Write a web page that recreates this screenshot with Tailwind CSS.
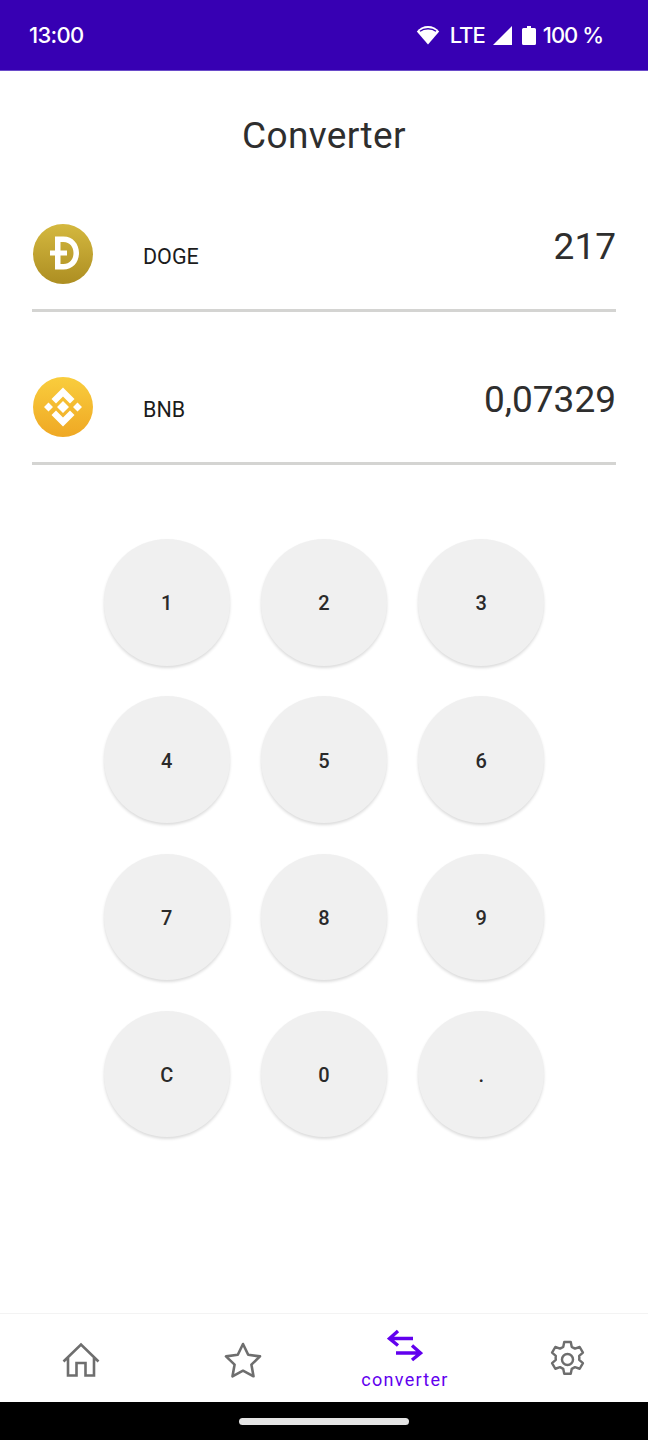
<!DOCTYPE html>
<html>
<head>
<meta charset="utf-8">
<script src="https://cdn.jsdelivr.net/npm/@tailwindcss/browser@4"></script>
</head>
<body class="bg-white font-['Roboto',sans-serif]">
<div class="w-[648px] h-[1440px] flex flex-col overflow-hidden bg-white">
  <!-- status bar -->
  <div class="h-[71px] shrink-0 bg-[#3700b3] flex items-center justify-between pl-[29px] pr-[45px] text-white text-[22px] font-medium font-['Inter','Roboto',sans-serif] border-b border-[#6a4bc9]">
    <span class="tracking-[-0.7px]">13:00</span>
    <div class="flex items-center">
      <svg width="24" height="20" viewBox="0 0 24 20" class="mr-[10px]"><path d="M12 19.500 0.800 6.500C3.500 3 7.500 1 12 1s8.500 2 11.200 5.500z" fill="#fff"/><path d="M4 6.300C6 4.600 8.900 3.700 12 3.700s6 .9 8 2.600" stroke="#3700b3" stroke-width="1.400" fill="none"/></svg>
      <span class="tracking-[-1px] mr-[8px]">LTE</span>
      <svg width="19" height="19" viewBox="0 0 19 19" class="mr-[10px]"><path d="M19 0v19H0z" fill="#fff"/></svg>
      <svg width="14" height="19" viewBox="0 0 14 19" class="mr-[7px]"><path d="M5 0h4v2h3.500q1.500 0 1.500 1.500v14q0 1.500-1.500 1.500h-11Q0 19 0 17.500v-14Q0 2 1.500 2H5z" fill="#fff"/></svg>
      <span class="tracking-[-1px]">100 %</span>
    </div>
  </div>

  <!-- title -->
  <h1 class="h-[129px] shrink-0 flex items-center justify-center text-[37px] tracking-[0.35px] text-[#2e2e2e] pt-[1px]">Converter</h1>

  <!-- converter rows -->
  <div class="flex flex-col gap-[41px] mx-[32px] mb-[74px]">
    <div class="h-[112px] pt-[24px] border-b-[3px] border-[#d4d4d2] flex items-start">
      <svg width="60" height="60" viewBox="0 0 60 60" class="ml-[1px] shrink-0">
        <defs><linearGradient id="d" x1="0" y1="0" x2="0" y2="1"><stop offset="0" stop-color="#d4b83f"/><stop offset="1" stop-color="#ad8e22"/></linearGradient></defs>
        <circle cx="30" cy="30" r="30" fill="url(#d)"/>
        <path d="M22 12.500h8.500C40 12.500 46 20 46 29s-6 16.500-15.500 16.500H22V31.500h-5v-5h5zM27.500 18v8.500H34v5h-6.500V40h3c6.500 0 10-5 10-11s-3.500-11-10-11z" fill="#fff"/>
      </svg>
      <span class="ml-[50px] mt-[20px] text-[21.500px] leading-[26px] text-[#1c1c1c]">DOGE</span>
      <span class="ml-auto mt-0 text-[37px] leading-[46px] text-[#2e2e2e]">217</span>
    </div>
    <div class="h-[112px] pt-[24px] border-b-[3px] border-[#d4d4d2] flex items-start">
      <svg width="60" height="60" viewBox="0 0 60 60" class="ml-[1px] shrink-0">
        <defs><linearGradient id="b" x1="0" y1="0" x2="0" y2="1"><stop offset="0" stop-color="#f9cd3d"/><stop offset="1" stop-color="#efa824"/></linearGradient></defs>
        <circle cx="30" cy="30" r="30" fill="url(#b)"/>
        <path d="M30 10.500 41.500 22 37 26.500l-7-7-7 7L18.500 22zM30 49.500 18.500 38l4.500-4.500 7 7 7-7L41.500 38zM11 30l4.500-4.500L20 30l-4.500 4.500zM40 30l4.500-4.500L49 30l-4.500 4.500zM30 24l6 6-6 6-6-6z" fill="#fff"/>
      </svg>
      <span class="ml-[50px] mt-[20px] text-[21.500px] leading-[26px] text-[#1c1c1c]">BNB</span>
      <span class="ml-auto mt-0 text-[37px] leading-[46px] text-[#2e2e2e]">0,07329</span>
    </div>
  </div>

  <!-- keypad -->
  <div class="grid grid-cols-[126px_126px_126px] auto-rows-[126.500px] gap-x-[31.300px] gap-y-[30.800px] justify-center text-[20px] font-medium text-[#2a2a2a]">
    <button class="pt-[2px] rounded-full bg-[#f0f0f0] shadow-[0_2px_3px_rgba(0,0,0,0.14)]">1</button>
    <button class="pt-[2px] rounded-full bg-[#f0f0f0] shadow-[0_2px_3px_rgba(0,0,0,0.14)]">2</button>
    <button class="pt-[2px] rounded-full bg-[#f0f0f0] shadow-[0_2px_3px_rgba(0,0,0,0.14)]">3</button>
    <button class="pt-[2px] rounded-full bg-[#f0f0f0] shadow-[0_2px_3px_rgba(0,0,0,0.14)]">4</button>
    <button class="pt-[2px] rounded-full bg-[#f0f0f0] shadow-[0_2px_3px_rgba(0,0,0,0.14)]">5</button>
    <button class="pt-[2px] rounded-full bg-[#f0f0f0] shadow-[0_2px_3px_rgba(0,0,0,0.14)]">6</button>
    <button class="pt-[2px] rounded-full bg-[#f0f0f0] shadow-[0_2px_3px_rgba(0,0,0,0.14)]">7</button>
    <button class="pt-[2px] rounded-full bg-[#f0f0f0] shadow-[0_2px_3px_rgba(0,0,0,0.14)]">8</button>
    <button class="pt-[2px] rounded-full bg-[#f0f0f0] shadow-[0_2px_3px_rgba(0,0,0,0.14)]">9</button>
    <button class="pt-[2px] rounded-full bg-[#f0f0f0] shadow-[0_2px_3px_rgba(0,0,0,0.14)]">C</button>
    <button class="pt-[2px] rounded-full bg-[#f0f0f0] shadow-[0_2px_3px_rgba(0,0,0,0.14)]">0</button>
    <button class="pt-[2px] rounded-full bg-[#f0f0f0] shadow-[0_2px_3px_rgba(0,0,0,0.14)]">.</button>
  </div>

  <!-- bottom nav -->
  <nav class="mt-auto h-[89px] shrink-0 border-t border-[#f3f3f3] grid grid-cols-4 bg-white">
    <div class="flex items-center justify-center pt-[3px]">
      <svg width="38" height="36" viewBox="0 0 38 36" fill="none" stroke="#6e6e6e" stroke-width="2.600"><path d="M1.500 19.500 19 2.500l17.500 17M6 16v17.500h8.500V21h9v12.500H32V16"/></svg>
    </div>
    <div class="flex items-center justify-center pt-[3px]">
      <svg width="38" height="36" viewBox="0 0 38 36" fill="none" stroke="#6e6e6e" stroke-width="2.600" stroke-linejoin="round"><path d="M19 2l5.200 10.800 11.800 1.600-8.600 8.200 2.100 11.700L19 28.700 8.500 34.300l2.100-11.700L2 14.400l11.800-1.600z"/></svg>
    </div>
    <div class="flex flex-col items-center pt-[15px]">
      <svg width="36" height="33" viewBox="0 0 36 33" fill="none" stroke="#6200ee" stroke-width="3.400"><path d="M11 2 2.500 9.500 11 16.500M3 9.500h23M25 16.500l8.500 7.500L25 31M33 24H9"/></svg>
      <span class="text-[18px] leading-[20px] mt-[8px] tracking-[1.300px] text-[#6200ee]">converter</span>
    </div>
    <div class="flex items-center justify-center pt-[3px]">
      <svg width="39" height="39" viewBox="0 0 24 24" fill="none" stroke="#6e6e6e" stroke-width="1.500" stroke-linejoin="round"><path d="M10 1.200h4l.6 3 2 1.100 2.900-1 2 3.500-2.300 2a8 8 0 0 1 0 2.400l2.300 2-2 3.500-2.900-1-2 1.100-.6 3h-4l-.6-3-2-1.100-2.900 1-2-3.500 2.300-2a8 8 0 0 1 0-2.400l-2.300-2 2-3.500 2.900 1 2-1.100z"/><circle cx="12" cy="12" r="3.400"/></svg>
    </div>
  </nav>

  <!-- gesture bar -->
  <div class="h-[38px] shrink-0 bg-black flex items-center justify-center">
    <div class="w-[170px] h-[7px] rounded-full bg-[#e4e4e4]"></div>
  </div>
</div>
</body>
</html>
